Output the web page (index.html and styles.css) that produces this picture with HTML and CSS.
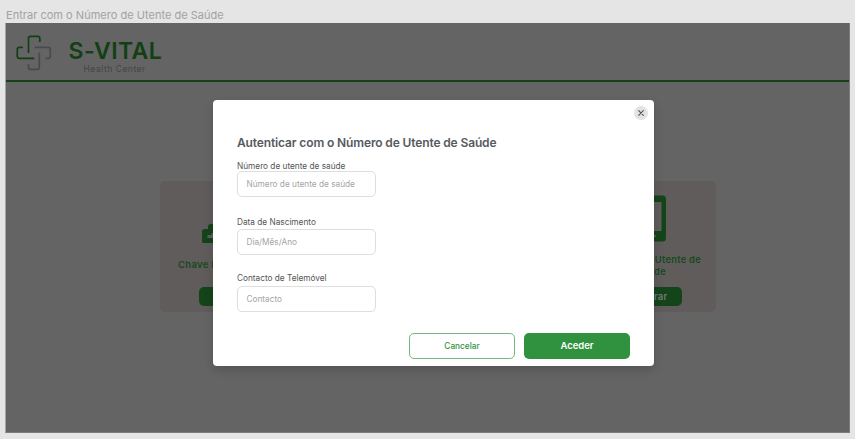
FILE: index.html
```html
<!DOCTYPE html>
<html lang="pt">
<head>
<meta charset="utf-8">
<title>S-VITAL</title>
<link rel="stylesheet" href="styles.css">
</head>
<body>
<div class="frame-name">Entrar com o Número de Utente de Saúde</div>
<div class="frame">
  <header class="header">
    <svg class="logo" width="36" height="36" viewBox="0 0 36 36" fill="none" stroke-width="1.7">
      <g stroke="#4a4a4a"><path d="M18.500 12.300H32.300Q34.300 12.300 34.300 14.300V21.300Q34.300 23.300 32.300 23.300H29.500"/><path d="M23.300 17.500V32.300Q23.300 34.300 21.300 34.300H14.500Q12.500 34.300 12.500 32.300V29"/></g>
      <g stroke="#124014"><path d="M23.800 7V3.300Q23.800 1.300 21.800 1.300H14.500Q12.500 1.300 12.500 3.300V18"/><path d="M7 12.300H3.300Q1.300 12.300 1.300 14.300V21.300Q1.300 23.300 3.300 23.300H18.300"/></g>
    </svg>
    <div class="brand">
      <div class="brand-name">S-VITAL</div>
      <div class="brand-sub">Health Center</div>
    </div>
  </header>
  <main class="cards">
    <section class="card key-card">
      <svg class="card-icon" width="80" height="50" viewBox="0 0 80 50" fill="#14441a"><path fill-rule="evenodd" d="M2 38.500Q2 36 4.500 36H8V34Q8 31 11 31H13V27H67V36H76V51H5Q2 51 2 48ZM7.500 42V45H72V42H13.500V40H11.500V42Z"/></svg>
      <div class="card-title"><span>Chave Móvel</span></div>
      <div class="card-button"></div>
    </section>
    <section class="card number-card">
      <svg class="card-icon" width="38" height="50" viewBox="0 0 38 50"><rect y="2.500" width="38" height="46" rx="3.500" fill="#14441a"/><path fill="#605c5c" d="M4 9H33.500V38H4Z"/><circle cx="26.500" cy="43" r="1.300" fill="#605c5c"/></svg>
      <div class="card-title"><span>Número de Utente de</span><span class="second-line">Saúde</span></div>
      <div class="card-button">Entrar</div>
    </section>
  </main>
</div>
<div class="modal">
  <div class="close"><svg width="6" height="6" viewBox="0 0 6 6" stroke="#555" stroke-width="1.1" stroke-linecap="round"><path d="M.7 .7L5.300 5.300M5.300 .7L.7 5.300"/></svg></div>
  <h1 class="title">Autenticar com o Número de Utente de Saúde</h1>
  <form class="form">
    <label class="field f1"><span class="label">Número de utente de saúde</span><span class="input">Número de utente de saúde</span></label>
    <label class="field f2"><span class="label">Data de Nascimento</span><span class="input">Dia/Mês/Ano</span></label>
    <label class="field f3"><span class="label">Contacto de Telemóvel</span><span class="input">Contacto</span></label>
  </form>
  <div class="actions">
    <div class="btn cancel">Cancelar</div>
    <div class="btn primary">Aceder</div>
  </div>
</div>
</body>
</html>
```
FILE: styles.css
```css
* { box-sizing: border-box; }
body {
  margin: 0;
  width: 855px;
  height: 439px;
  overflow: hidden;
  background: #e5e5e5;
  font-family: Inter, sans-serif;
}
.frame-name {
  height: 23px;
  padding: 8px 0 0 6px;
  font-size: 11px;
  line-height: 14px;
  letter-spacing: .02px;
  color: #a2a2a2;
  white-space: nowrap;
}
.frame {
  width: 845px;
  height: 410px;
  margin-left: 5px;
  background: #646464;
  border: 1px solid #7c7c7c;
  border-top: 0;
  border-left-color: #a4a4a4;
}
.header {
  display: flex;
  height: 59px;
  border-bottom: 2px solid #144118;
  padding: 12px 0 0 10px;
}
.brand { margin: 2px 0 0 16.500px; }
.brand-name {
  font-size: 23px;
  line-height: 28px;
  font-weight: 600;
  letter-spacing: .45px;
  color: #124014;
}
.brand-sub {
  margin: -1px 0 0 15px;
  font-size: 8.500px;
  line-height: 10px;
  letter-spacing: .52px;
  color: #444;
}
.cards {
  display: flex;
  justify-content: space-between;
  width: 556px;
  margin: 99px 0 0 154px;
}
.card {
  height: 131px;
  border-radius: 5px;
  background: #605c5c;
  display: flex;
  flex-direction: column;
  padding-top: 12px;
}
.key-card { width: 160px; align-items: center; }
.number-card { width: 152px; align-items: flex-end; }
.number-card .card-icon { margin-right: 50.500px; }
.number-card .card-title { margin-right: 15px; }
.number-card .card-button { margin-right: 34.500px; padding-right: 14px; text-align: right; }
.card-icon { flex: none; }
.card-title {
  height: 24px;
  margin-top: 10.500px;
  display: flex;
  flex-direction: column;
  align-items: flex-end;
  justify-content: center;
  font-size: 9.300px;
  line-height: 12px;
  font-weight: 600;
  letter-spacing: .3px;
  color: #174a1c;
  white-space: nowrap;
}
.key-card .card-title {
  width: 124px;
  align-items: flex-start;
  margin: 9.500px 0 1px;
  font-size: 9.500px;
}
.second-line { margin-right: 35px; }
.card-button {
  width: 82px;
  height: 19px;
  margin-top: 9.500px;
  border-radius: 5px;
  background: #14441a;
  color: #777;
  font-size: 9.500px;
  line-height: 19px;
  font-weight: 600;
  letter-spacing: .2px;
}
.modal {
  position: absolute;
  left: 213px;
  top: 100px;
  width: 441px;
  height: 266px;
  padding: 0 24px;
  background: #fff;
  border-radius: 4px;
  box-shadow: 0 4px 10px rgba(0, 0, 0, .16);
}
.close {
  position: absolute;
  top: 6px;
  right: 6px;
  width: 14px;
  height: 14px;
  border-radius: 50%;
  background: #e3e3e3;
  display: flex;
  align-items: center;
  justify-content: center;
}
.title {
  margin: 0;
  padding-top: 35px;
  font-size: 12px;
  line-height: 16px;
  font-weight: 600;
  letter-spacing: -.13px;
  color: #565a60;
  white-space: nowrap;
}
.form { padding-top: 10px; }
.field { display: block; width: 139px; }
.label {
  display: block;
  font-size: 8.250px;
  line-height: 10px;
  color: #555;
  white-space: nowrap;
}
.input {
  display: block;
  height: 26px;
  padding-left: 8.500px;
  border: 1px solid #dedede;
  border-radius: 5px;
  font-size: 8.250px;
  line-height: 25px;
  color: #a5a5a5;
}
.f2 { margin-top: 20px; }
.f3 { margin-top: 18px; }
.f2 .input { margin-top: 2px; }
.f3 .input { margin-top: 3px; }
.actions {
  display: flex;
  justify-content: flex-end;
  gap: 9px;
  margin-top: 21px;
}
.btn {
  width: 106px;
  height: 26px;
  border-radius: 5px;
  text-align: center;
}
.cancel {
  border: 1px solid #75b87e;
  color: #30923f;
  font-size: 8.250px;
  font-weight: 500;
  line-height: 25px;
}
.primary {
  background: #30923f;
  color: #fff;
  font-size: 9.500px;
  font-weight: 600;
  line-height: 25px;
}
```
